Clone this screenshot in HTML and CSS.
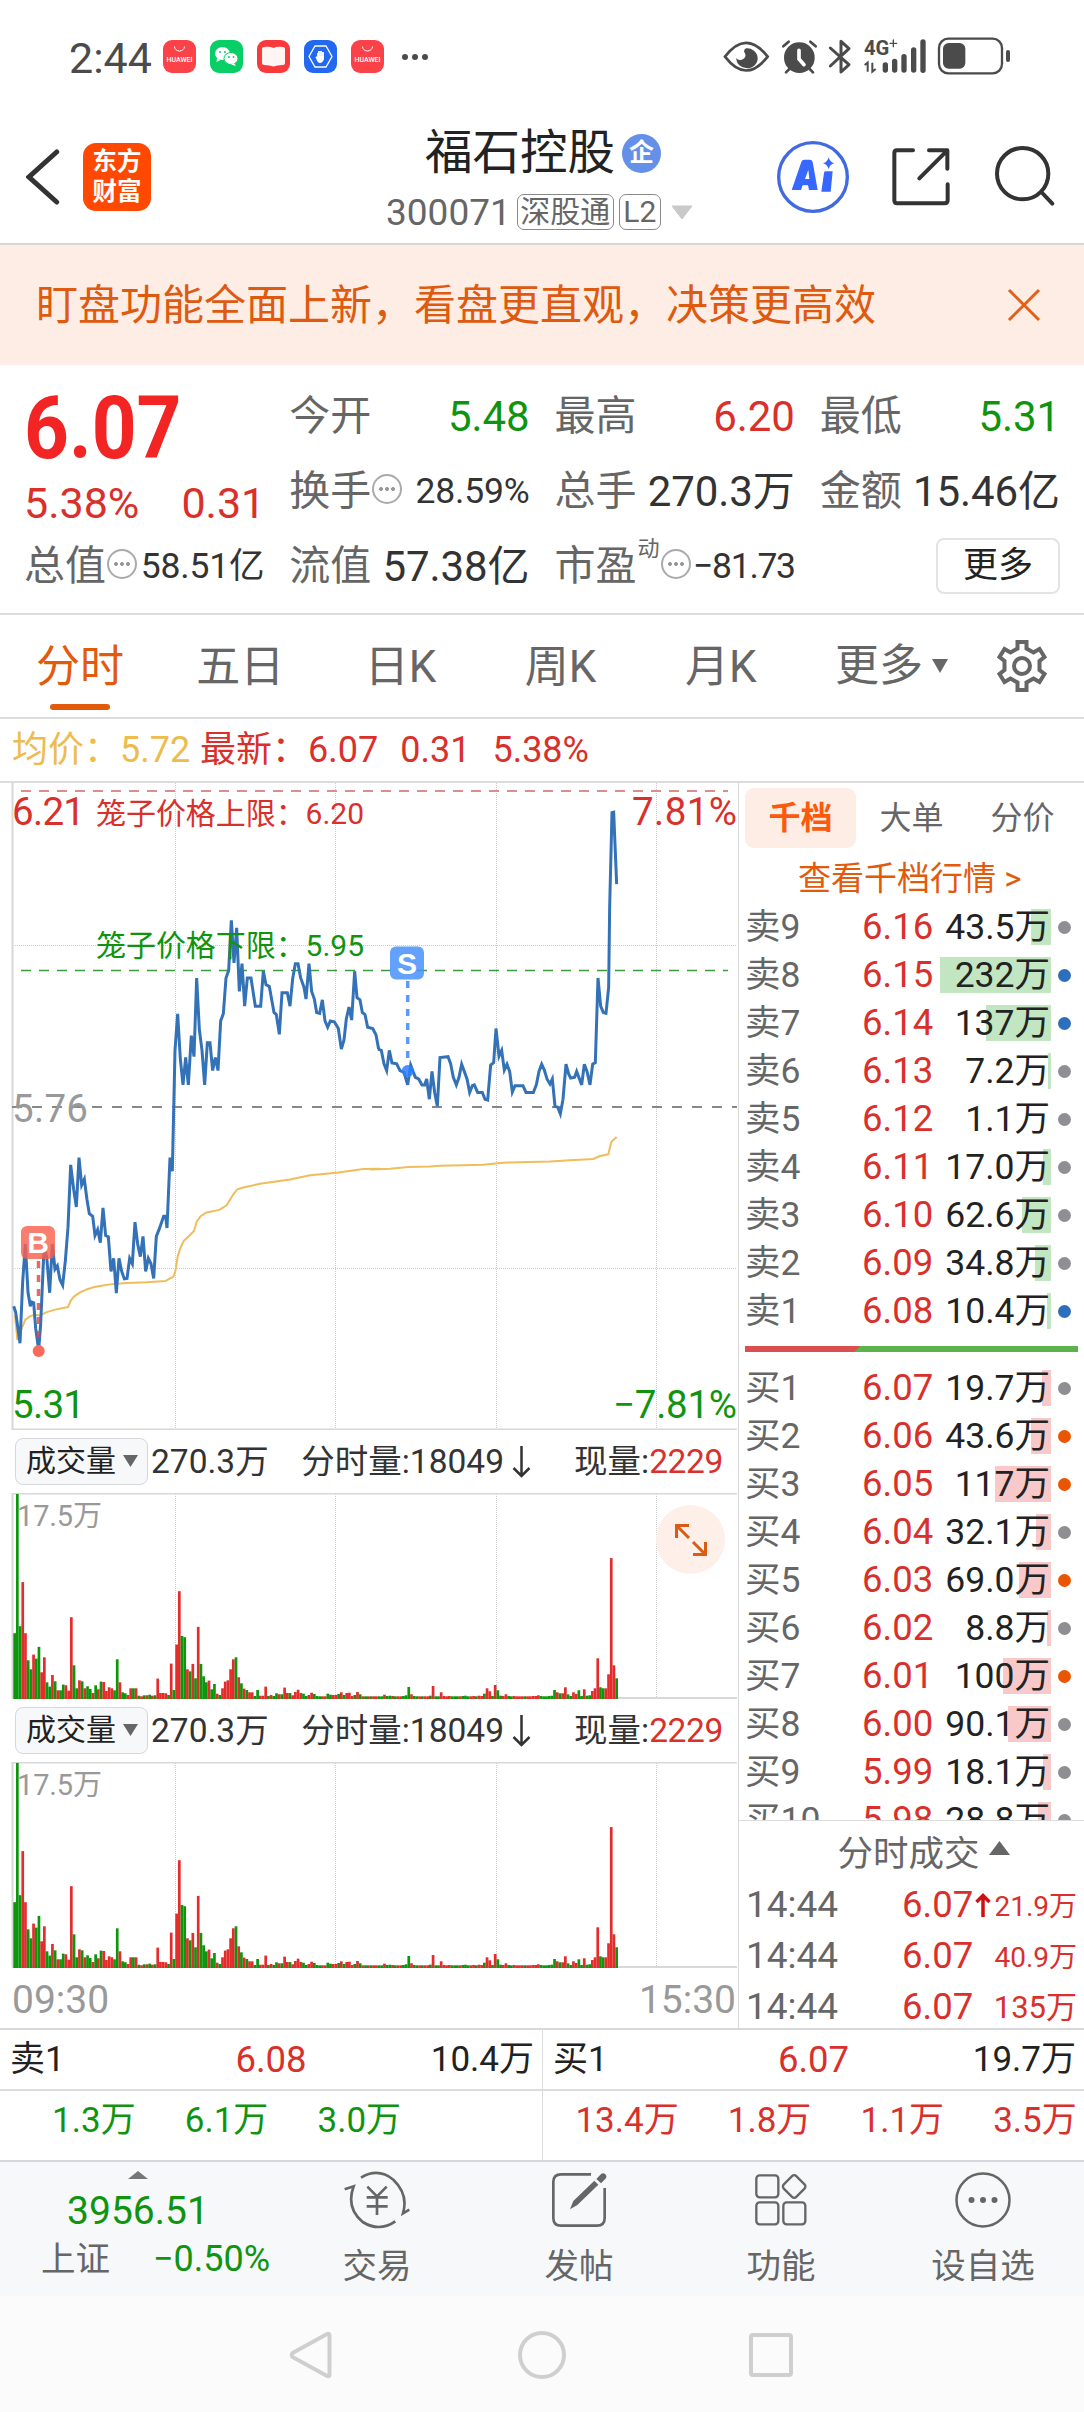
FILE: index.html
```html
<!DOCTYPE html>
<html lang="zh-CN">
<head>
    <meta charset="UTF-8">
    <meta name="viewport" content="width=device-width, initial-scale=1.0">
    <title>福石控股 300071</title>
    <link rel="stylesheet" href="styles.css">
</head>
<body>
    <div class="status-bar">
        <span class="clock">2:44</span>
        <div class="apps">
            <svg class="app" viewBox="0 0 33 33"><rect width="33" height="33" rx="9" fill="#fb4249"/><path d="M11.500 6.500a5 4.500 0 0 0 10 0" fill="none" stroke="#fff"/><text x="16.500" y="21.500" textLength="26" class="app-text">HUAWEI</text></svg>
            <svg class="app" viewBox="0 0 33 33"><rect width="33" height="33" rx="9" fill="#07cf66"/><ellipse cx="12.500" cy="13.500" rx="7.500" ry="6.500" fill="#fff"/><path d="M7 18l-.5 4 4-2z" fill="#fff"/><ellipse cx="21" cy="18.500" rx="7" ry="6" fill="#fff" stroke="#07cf66"/><path d="M24 23l2 3-5-1.500z" fill="#fff"/><g fill="#07cf66"><circle cx="10" cy="12" r="1"/><circle cx="15" cy="12" r="1"/><circle cx="19" cy="17" r=".9"/><circle cx="23.500" cy="17" r=".9"/></g></svg>
            <svg class="app" viewBox="0 0 33 33"><rect width="33" height="33" rx="9" fill="#f93a3c"/><path d="M5 9q0-2 2-2 6-1 9.500 1Q20 6 26 7q2 0 2 2v14q0 2-2 2-6 0-9.500 1.500Q13 25 7 25q-2 0-2-2z" fill="#fff5f2"/></svg>
            <svg class="app" viewBox="0 0 33 33"><rect width="33" height="33" rx="9" fill="#2268f0"/><path d="M11 6h11l6 10.500L22 27H11L5 16.500z" fill="none" stroke="#fff" stroke-width="1.300"/><path d="M12 17l2 2v-6M15 18v-7M17 18v-7M19 18v-6v7q-1 3-3 3t-3-4" fill="none" stroke="#fff" stroke-width="1.800"/><path d="M13.500 16h6v4q-1 2-3 2t-3-3z" fill="#fff"/></svg>
            <svg class="app" viewBox="0 0 33 33"><rect width="33" height="33" rx="9" fill="#fb4249"/><path d="M11.500 6.500a5 4.500 0 0 0 10 0" fill="none" stroke="#fff"/><text x="16.500" y="21.500" textLength="26" class="app-text">HUAWEI</text></svg>
        </div>
        <svg class="dots" width="28" height="8" viewBox="0 0 28 8" fill="#4b4b4b"><circle cx="4" cy="4" r="3"/><circle cx="14" cy="4" r="3"/><circle cx="24" cy="4" r="3"/></svg>
        <div class="signals">
            <svg width="47" height="38" viewBox="476 20 141 114"><path d="M482 79Q545-4 610 79Q545 162 482 79z" fill="none" stroke="#4b4b4b" stroke-width="8"/><path d="M545 54a32 30 0 1 1-29 29q5 8 16 5 14-4 11-16-1-5-4-8 0-7 6-10z" fill="#4b4b4b"/></svg>
            <svg width="37" height="38" viewBox="650 20 111 114" stroke="#4b4b4b" stroke-linecap="round"><circle cx="705" cy="82" r="46" fill="#4b4b4b" stroke="none"/><path d="M657 48l16-14M738 34l16 14M665 126l10-10M746 126l-10-10" stroke-width="8"/><path d="M704 60v26l15 17" fill="none" stroke="#fff" stroke-width="11"/></svg>
            <svg width="24" height="38" viewBox="792 20 72 114" fill="none" stroke="#4b4b4b" stroke-width="9" stroke-linejoin="round" stroke-linecap="round"><path d="M799 53l56 50-24 22V33l24 22-56 52"/></svg>
            <svg width="64" height="38" viewBox="894 20 192 114" stroke="#4b4b4b" stroke-linecap="round"><text x="897" y="74" textLength="76" lengthAdjust="spacingAndGlyphs" class="net">4G</text><path d="M975 39h20M985 29v20" stroke-width="4"/><path d="M899 104l9-7v27M922 97v27l10-8" fill="none" stroke-width="6" stroke-linecap="butt"/><path d="M961 104v15M989 93v26M1017 79v40M1046 59v60M1074 35v85" stroke-width="16"/></svg>
            <svg width="74" height="38" viewBox="1118 20 222 114"><rect x="1124" y="25" width="189" height="104" rx="28" fill="none" stroke="#4b4b4b" stroke-width="7"/><rect x="1136" y="38" width="67" height="77" rx="17" fill="#4b4b4b"/><path d="M1331 65v24" stroke="#4b4b4b" stroke-width="12" stroke-linecap="round"/></svg>
        </div>
    </div>

    <div class="header">
        <svg class="back" width="34" height="58" viewBox="78 355 102 174"><path d="M170 367L87 442l83 75" fill="none" stroke="#333" stroke-width="15" stroke-linecap="round"/></svg>
        <div class="logo">东方<br>财富</div>
        <div class="stock">
            <div class="stock-name">福石控股<span class="corp">企</span></div>
            <div class="stock-code">300071<span class="tag">深股通</span><span class="tag tag-l2">L2</span><svg width="22" height="15" viewBox="0 0 22 15"><path d="M1 1h20L11 14z" fill="#c9c9c9" stroke="#c9c9c9" stroke-linejoin="round"/></svg></div>
        </div>
        <div class="actions">
            <svg width="74" height="74" viewBox="634 331 222 222"><circle cx="745" cy="442" r="103" fill="none" stroke="#4169e1" stroke-width="10"/><path d="M681 481l29-84q2-7 9-7h16q7 0 9 7l15 84h-26l-3-14h-16l-5 14zM721 448h13l-3-27z" fill="#3668ff" fill-rule="evenodd"/><path d="M778 430q0-5 5-5h21l-6 61h-28zM792 383q3 14 17 18-14 4-17 17-4-13-17-17 14-4 17-18z" fill="#3668ff"/></svg>
            <svg width="60" height="60" viewBox="980 353 180 180" fill="none" stroke="#333" stroke-width="12" stroke-linecap="round" stroke-linejoin="round"><path d="M1046 363h-48q-8 0-8 8v142q0 9 8 9h143q9 0 9-9v-48M1094 363h55v55M1146 366l-81 81"/></svg>
            <svg width="62" height="62" viewBox="1290 347 186 186" fill="none" stroke="#333" stroke-width="12" stroke-linecap="round"><circle cx="1376" cy="433" r="77"/><path d="M1432 488l33 35"/></svg>
        </div>
    </div>

    <div class="banner">
        <span>盯盘功能全面上新，看盘更直观，决策更高效</span>
        <svg width="34" height="34" viewBox="0 0 34 34"><path d="M2 2l30 30M32 2L2 32" stroke="#e0601a" stroke-width="3"/></svg>
    </div>

    <div class="quote">
        <div class="now">
            <div class="now-price">6.07</div>
            <div class="now-change"><span>5.38%</span><span>0.31</span></div>
        </div>
        <div class="cell">今开<b class="green">5.48</b></div>
        <div class="cell">最高<b class="red">6.20</b></div>
        <div class="cell">最低<b class="green">5.31</b></div>
        <div class="cell">换手<i class="more-dot"></i><b class="small">28.59%</b></div>
        <div class="cell">总手<b>270.3万</b></div>
        <div class="cell">金额<b>15.46亿</b></div>
        <div class="cell">总值<i class="more-dot"></i><b class="small">58.51亿</b></div>
        <div class="cell">流值<b>57.38亿</b></div>
        <div class="cell">市盈<sup>动</sup><i class="more-dot"></i><b class="small tight">−81.73</b></div>
        <div class="cell"><span class="more-btn">更多</span></div>
    </div>

    <div class="tabs">
        <div class="tab active">分时</div>
        <div class="tab">五日</div>
        <div class="tab">日K</div>
        <div class="tab">周K</div>
        <div class="tab">月K</div>
        <div class="tab tab-more">更多<svg width="16" height="14" viewBox="0 0 16 14"><path d="M0 0h16L8 14z" fill="#666"/></svg></div>
        <svg class="gear" width="54" height="54" viewBox="0 0 54 54" fill="none" stroke="#666" stroke-width="4"><path d="M22.500 3h9v6.500l7 4 6-3.500 5 8-5 4v9l5 4-5 8-6-3.500-7 4V51h-9v-7.500l-7-4-6 3.500-5-8 5-4v-9l-5-4 5-8 6 3.500 7-4z"/><circle cx="27" cy="27" r="8"/></svg>
    </div>

    <div class="summary">
        <span class="avg">均价：5.72</span>
        <span>最新：6.07</span>
        <span>0.31</span>
        <span>5.38%</span>
    </div>

    <div class="board">
        <div class="charts">
            <svg class="price-chart" width="738" height="648" viewBox="0 781 738 648">
                <g class="grid">
                    <path d="M175.500 782v646M335.500 782v646M496.500 782v646M656.500 782v646M13 944.500h724M13 1267.500h724"/>
                </g>
                <path d="M12.500 782v646.500H737" class="axis"/>
                <path d="M21 790h707" stroke="#d98f8f" stroke-width="2" stroke-dasharray="10 8"/>
                <path d="M21 969.500h707" stroke="#3d9a3d" stroke-width="1.500" stroke-dasharray="10 8"/>
                <path d="M12 1106h725" stroke="#888" stroke-width="2" stroke-dasharray="10 10"/>
                <g transform="translate(0 780) scale(.33333 .42088)">
                    <g class="avg-line">
                        <polyline points="45,1270 52,1328 60,1310 68,1295 76,1280 90,1272 105,1268 120,1270 140,1262 165,1256 190,1252 204,1250 212,1235 222,1225 240,1215 260,1208 280,1203 300,1200 330,1196 380,1193 440,1191 497,1188 510,1182 520,1178 526,1165 533,1130 541,1110 552,1092 565,1083 582,1069 590,1047 602,1034 620,1025 658,1019 680,1008 700,982 712,970 730,966 780,957 870,947 930,937 1010,931 1090,922 1140,921"/>
                        <polyline transform="translate(1110 0)" points="0,923 60,921 115,917 180,916 210,914 340,912 400,907 540,904 600,901 670,898 690,891 715,887 724,857 740,846"/>
                    </g>
                    <g class="price-line">
                        <polyline points="41,1248 47,1262 60,1336 68,1190 76,1100 84,1215 91,1248 95,1238 101,1240 107,1300 116,1352 122,1290 132,1110 140,1130 149,1216 157,1100 165,1160 172,1152 180,1185 188,1198 196,1140 204,1060 212,912 221,970 229,1012 237,895 245,960 253,946 261,995 268,1028 278,1034 285,1080 293,1066 301,1097 309,1014 317,1080 325,1083 333,1165 341,1134 349,1217 357,1134 365,1165 373,1183 381,1182 389,1134 397,1147 405,1048 413,1100 421,1130 429,1082 437,1165 445,1134 453,1147 461,1182 469,1082 477,1066 491,1034 497,1034 501,1062 510,895 517,927 525,640 533,553 541,660 549,722 557,657 565,722 574,605 582,655 590,468 598,590 606,640 614,722 622,622 630,622 638,688 646,657 654,688 662,570 670,553 678,468 686,450 694,331 702,432 710,349 718,500 726,434 734,535 742,468 753,468 766,535 782,535 790,452 798,484 808,488 822,550 829,555 838,602 846,503 862,503 870,535 878,470 886,434 894,434 902,468 912,490 918,518 927,434 935,500 943,518 950,550 959,552 967,520 975,570 983,585 991,570 1003,572 1015,588 1024,637 1032,615 1039,565 1047,537 1055,568 1064,452 1071,515 1080,520 1087,550 1095,555 1103,585 1118,588 1128,603 1136,637"/>
                        <polyline transform="translate(1110 0)" points="24,637 34,640 42,672 50,688 58,640 66,670 80,672 90,688 102,692 113,722 122,675 136,704 146,708 156,722 164,722 170,708 178,756 186,690 194,740 202,773 210,657 234,655 242,672 250,704 259,722 267,704 275,673 283,690 291,708 299,740 307,724 313,722 323,740 337,740 345,756 353,758 362,675 371,669 378,588 387,654 395,640 403,687 411,673 419,690 427,739 435,724 459,724 468,740 490,740 499,722 507,690 515,673 523,687 531,708 540,720 547,708 555,773 563,775 571,791 579,756 588,673 596,696 602,706 614,704 620,690 635,722 643,673 651,690 660,722 668,673 676,669 684,468 692,535 700,550 708,552 716,490 719,300 726,75 731,74 740,245"/>
                    </g>
                </g>
                <g class="buy-mark">
                    <path d="M38.500 1260v84" stroke="#e0453a" stroke-opacity=".8" stroke-width="3.500" stroke-dasharray="7 7"/>
                    <circle cx="38.700" cy="1350" r="6" fill="#fa6a5a"/>
                    <rect x="21" y="1225" width="34" height="33" rx="6" fill="#f9604e" fill-opacity=".82"/>
                    <text x="38" y="1252" text-anchor="middle">B</text>
                </g>
                <g class="sell-mark">
                    <path d="M407.700 980v84" stroke="#5b9bf5" stroke-width="3.500" stroke-dasharray="7 7"/>
                    <circle cx="407.700" cy="1070" r="6" fill="#2a80ff" fill-opacity=".85"/>
                    <rect x="390" y="945.500" width="34" height="33" rx="6" fill="#4a92fb" fill-opacity=".86"/>
                    <text x="407" y="973" text-anchor="middle">S</text>
                </g>
                <g class="labels">
                    <text x="12" y="824" textLength="73" class="t-red">6.21</text>
                    <text x="737" y="824" text-anchor="end" textLength="105" class="t-red">7.81%</text>
                    <text x="12" y="1121" textLength="76" class="t-gray">5.76</text>
                    <text x="12" y="1417" textLength="73" class="t-green">5.31</text>
                    <text x="737" y="1417" text-anchor="end" textLength="124" class="t-green">−7.81%</text>
                </g>
                <g class="limits">
                    <text x="96" y="823" textLength="268" class="t-red">笼子价格上限：6.20</text>
                    <text x="96" y="955" textLength="268" class="t-green">笼子价格下限：5.95</text>
                </g>
            </svg>

            <div class="indicator">
                <span class="picker">成交量<svg width="15" height="12" viewBox="0 0 15 12"><path d="M0 0h15L7.500 12z" fill="#666"/></svg></span>
                <span>270.3万</span>
                <span class="per-min">分时量:18049<svg width="19" height="32" viewBox="0 0 19 32"><path d="M9.500 0v30M1.500 22l8 8 8-8" fill="none" stroke="#333" stroke-width="2.500"/></svg></span>
                <span class="last-vol">现量:<em>2229</em></span>
            </div>
            <div class="volume">
                <svg class="volume-chart" width="738" height="206" viewBox="0 0 738 206"></svg>
                <div class="expand"><svg width="36" height="36" viewBox="0 0 36 36" fill="none" stroke="#dd5a14" stroke-width="3"><path d="M16 3.500H3.500V16M3.500 3.500l12.500 12.500M20 32.500h12.500V20M32.500 32.500L20 20"/></svg></div>
            </div>

            <div class="indicator">
                <span class="picker">成交量<svg width="15" height="12" viewBox="0 0 15 12"><path d="M0 0h15L7.500 12z" fill="#666"/></svg></span>
                <span>270.3万</span>
                <span class="per-min">分时量:18049<svg width="19" height="32" viewBox="0 0 19 32"><path d="M9.500 0v30M1.500 22l8 8 8-8" fill="none" stroke="#333" stroke-width="2.500"/></svg></span>
                <span class="last-vol">现量:<em>2229</em></span>
            </div>
            <div class="volume">
                <svg class="volume-chart" width="738" height="206" viewBox="0 0 738 206"></svg>
            </div>
            <div class="times"><span>09:30</span><span>15:30</span></div>
        </div>

        <div class="depth">
            <div class="depth-tabs"><span class="on">千档</span><span>大单</span><span>分价</span></div>
            <div class="depth-link">查看千档行情 &gt;</div>
            <div class="levels sell">
                <div class="level"><span>卖9</span><b>6.16</b><em><i style="width:20px"></i>43.5万</em><u></u></div>
                <div class="level"><span>卖8</span><b>6.15</b><em><i style="width:111px"></i>232万</em><u class="blue"></u></div>
                <div class="level"><span>卖7</span><b>6.14</b><em><i style="width:65px"></i>137万</em><u class="blue"></u></div>
                <div class="level"><span>卖6</span><b>6.13</b><em><i style="width:3px"></i>7.2万</em><u></u></div>
                <div class="level"><span>卖5</span><b>6.12</b><em>1.1万</em><u></u></div>
                <div class="level"><span>卖4</span><b>6.11</b><em><i style="width:8px"></i>17.0万</em><u></u></div>
                <div class="level"><span>卖3</span><b>6.10</b><em><i style="width:29px"></i>62.6万</em><u></u></div>
                <div class="level"><span>卖2</span><b>6.09</b><em><i style="width:16px"></i>34.8万</em><u></u></div>
                <div class="level"><span>卖1</span><b>6.08</b><em><i style="width:4px"></i>10.4万</em><u class="blue"></u></div>
            </div>
            <div class="ratio"></div>
            <div class="levels buy">
                <div class="level"><span>买1</span><b>6.07</b><em><i style="width:9px"></i>19.7万</em><u></u></div>
                <div class="level"><span>买2</span><b>6.06</b><em><i style="width:20px"></i>43.6万</em><u class="orange"></u></div>
                <div class="level"><span>买3</span><b>6.05</b><em><i style="width:56px"></i>117万</em><u class="orange"></u></div>
                <div class="level"><span>买4</span><b>6.04</b><em><i style="width:15px"></i>32.1万</em><u></u></div>
                <div class="level"><span>买5</span><b>6.03</b><em><i style="width:32px"></i>69.0万</em><u class="orange"></u></div>
                <div class="level"><span>买6</span><b>6.02</b><em><i style="width:4px"></i>8.8万</em><u></u></div>
                <div class="level"><span>买7</span><b>6.01</b><em><i style="width:48px"></i>100万</em><u class="orange"></u></div>
                <div class="level"><span>买8</span><b>6.00</b><em><i style="width:43px"></i>90.1万</em><u></u></div>
                <div class="level"><span>买9</span><b>5.99</b><em><i style="width:8px"></i>18.1万</em><u></u></div>
                <div class="level"><span>买10</span><b>5.98</b><em><i style="width:13px"></i>28.8万</em><u></u></div>
            </div>
            <div class="deals">
                <div class="deals-title">分时成交<svg width="21" height="14" viewBox="0 0 21 14"><path d="M10.500 0L21 14H0z" fill="#666"/></svg></div>
                <div class="deal"><span>14:44</span><b>6.07</b><svg width="16" height="24" viewBox="0 0 16 24"><path d="M8 24V3M1.500 9L8 2.500 14.500 9" fill="none" stroke="#cf1010" stroke-width="3.500"/></svg><em>21.9万</em></div>
                <div class="deal"><span>14:44</span><b>6.07</b><em>40.9万</em></div>
                <div class="deal"><span>14:44</span><b>6.07</b><em class="wide">135万</em></div>
            </div>
        </div>
    </div>

    <div class="best">
        <div class="side">
            <div class="side-top"><span>卖1</span><b>6.08</b><span>10.4万</span></div>
            <div class="side-orders green"><span>1.3万</span><span>6.1万</span><span>3.0万</span></div>
        </div>
        <div class="side">
            <div class="side-top"><span>买1</span><b>6.07</b><span>19.7万</span></div>
            <div class="side-orders red"><span>13.4万</span><span>1.8万</span><span>1.1万</span><span>3.5万</span></div>
        </div>
    </div>

    <div class="toolbar">
        <div class="index">
            <svg width="20" height="8" viewBox="0 0 20 8"><path d="M10 0l10 8H0z" fill="#777"/></svg>
            <div class="index-value">3956.51</div>
            <div class="index-row"><span>上证</span><b>−0.50%</b></div>
        </div>
        <div class="tool">
            <svg width="68" height="60" viewBox="37 60 204 180" fill="none" stroke="#666" stroke-width="8"><path d="M91 83Q142 52 188 89q46 44 29 101l19-11M194 214Q146 247 96 216q-51-42-27-107l-27 9"/><path d="M110 110l29 29 29-29M139 139v56M108 142h63M108 169h63"/></svg>
            <span>交易</span>
        </div>
        <div class="tool">
            <svg width="60" height="60" viewBox="657 60 180 180" fill="none" stroke="#666" stroke-width="8"><path d="M783 73h-90q-23 0-23 23v108q0 23 23 23h108q23 0 23-23v-90"/><path d="M720 178l10-25 63-61 12 12-63 61zM799 87l12-13q8-8 15-1t-1 15l-12 12z" fill="#666" stroke="none"/></svg>
            <span>发帖</span>
        </div>
        <div class="tool">
            <svg width="60" height="60" viewBox="1264 60 180 180" fill="none" stroke="#666" stroke-width="7"><rect x="1280" y="76" width="66" height="66" rx="10"/><rect x="1280" y="157" width="66" height="66" rx="10"/><rect x="1361" y="157" width="66" height="66" rx="10"/><rect x="1367" y="83" width="53" height="53" rx="9" transform="rotate(45 1393.500 109.500)"/></svg>
            <span>功能</span>
        </div>
        <div class="tool">
            <svg width="60" height="60" viewBox="0 0 60 60"><circle cx="30" cy="30" r="26.500" fill="none" stroke="#666" stroke-width="2.500"/><g fill="#666"><circle cx="18.500" cy="30" r="3"/><circle cx="30" cy="30" r="3"/><circle cx="41.500" cy="30" r="3"/></g></svg>
            <span>设自选</span>
        </div>
    </div>

    <div class="sys-nav">
        <svg width="44" height="50" viewBox="0 0 44 50"><path d="M3.500 23Q2 25 3.500 27L38 46q2.500 1 2.500-1.500V5.500Q40.500 3 38 4z" class="sys"/></svg>
        <svg width="50" height="50" viewBox="0 0 50 50"><circle cx="25" cy="25" r="22" class="sys"/></svg>
        <svg width="44" height="44" viewBox="0 0 44 44"><rect x="2" y="2" width="40" height="40" rx="2" class="sys"/></svg>
    </div>

    <script src="chart.js"></script>
</body>
</html>
```
FILE: styles.css
```css
* {
    box-sizing: border-box;
}
body {
    margin: 0;
    width: 1084px;
    height: 2412px;
    overflow: hidden;
    background: #fff;
    color: #222;
    font-family: Roboto, "Noto Sans CJK SC", sans-serif;
    font-size: 36px;
}
b, em, i, u {
    font-weight: 400;
    font-style: normal;
    text-decoration: none;
}
svg {
    display: block;
    flex-shrink: 0;
}
.red {
    color: #d9302c;
}
.green {
    color: #109410;
}

/* status bar */
.status-bar {
    display: flex;
    align-items: center;
    height: 113px;
    padding: 0 73px 0 69px;
}
.clock {
    font-size: 43px;
    color: #4b4b4b;
    width: 94px;
    line-height: 50px;
    padding-top: 2px;
}
.apps {
    display: flex;
    gap: 14px;
}
.app {
    width: 33px;
    height: 33px;
}
.app-text {
    font: 500 7px Roboto, sans-serif;
    fill: #fff;
    text-anchor: middle;
}
.dots {
    margin-left: 17px;
}
.signals {
    display: flex;
    gap: 10.500px;
    margin-left: auto;
    margin-top: -2px;
}
.net {
    font: 700 62px Roboto, sans-serif;
    fill: #4b4b4b;
    stroke: none;
}

/* header */
.header {
    display: flex;
    align-items: flex-start;
    position: relative;
    height: 132px;
    border-bottom: 2px solid #d5d6da;
}
.back {
    margin: 35px 0 0 26px;
}
.logo {
    width: 68px;
    height: 68px;
    margin: 30px 0 0 23px;
    padding-top: 4px;
    border-radius: 13px;
    background: #ff4800;
    color: #fff;
    font-size: 24.500px;
    font-weight: 700;
    line-height: 30px;
    text-align: center;
}
.stock {
    width: 310px;
    margin: 11px 0 0 235px;
}
.stock-name {
    display: flex;
    align-items: center;
    padding-left: 39px;
    font-size: 47.500px;
    line-height: 58px;
}
.corp {
    width: 39px;
    height: 39px;
    margin: 1px 0 0 7px;
    border-radius: 50%;
    background: #6490e8;
    color: #fff;
    font-size: 25px;
    font-weight: 700;
    line-height: 37px;
    text-align: center;
}
.stock-code {
    display: flex;
    align-items: center;
    height: 60px;
    color: #666;
    font-size: 37px;
}
.tag {
    width: 97px;
    height: 36px;
    margin-left: 6px;
    border: 1.500px solid #888;
    border-radius: 7px;
    font-size: 30px;
    line-height: 33px;
    text-align: center;
}
.tag-l2 {
    width: 42px;
    margin-left: 5px;
}
.stock-code svg {
    margin-left: 10px;
}
.actions {
    display: flex;
    align-items: center;
    margin: 27px 0 0 80px;
}
.actions svg:nth-child(2) {
    margin-left: 41px;
}
.actions svg:nth-child(3) {
    margin-left: 43px;
    margin-top: -3px;
}

/* banner */
.banner {
    display: flex;
    align-items: center;
    justify-content: space-between;
    height: 120px;
    padding: 2px 43px 0 36px;
    background: #fdede4;
    color: #dd5a10;
    font-size: 42px;
    line-height: 60px;
}
.banner svg {
    margin-top: -2px;
}

/* quote */
.quote {
    display: grid;
    grid-template-columns: repeat(4, 1fr);
    grid-auto-rows: 75px;
    column-gap: 25px;
    height: 250px;
    padding: 14px 24px 0 24px;
    border-bottom: 2px solid #dcdcdc;
}
.now {
    grid-row: span 2;
    color: #d9302c;
}
.now-price {
    height: 99px;
    padding-top: 3px;
    font-size: 88px;
    font-weight: 700;
    line-height: 92px;
    color: #f22424;
    transform: scaleX(.89);
    transform-origin: left;
}
.now-change {
    display: flex;
    justify-content: space-between;
    margin-right: -1px;
    font-size: 43px;
    line-height: 50px;
}
.cell {
    display: flex;
    align-items: center;
    color: #666;
    font-size: 41px;
    line-height: 75px;
    white-space: nowrap;
}
.cell b {
    margin-left: auto;
    color: #333;
    font-size: 42px;
    letter-spacing: -.1px;
}
.cell .red {
    color: #d9302c;
}
.cell .green {
    color: #109410;
}
.cell .small {
    font-size: 35.500px;
    letter-spacing: -.2px;
}
.cell .tight {
    letter-spacing: -1.300px;
}
.cell sup {
    font-size: 22px;
    line-height: 30px;
    margin: -36px 0 0 1px;
}
.more-dot {
    width: 30px;
    height: 30px;
    margin: -5px 0 0 1px;
    border: 2px solid #aaa;
    border-radius: 50%;
    background: radial-gradient(circle, #999 1.800px, transparent 2.200px) center / 6px 6px no-repeat,
        radial-gradient(circle, #999 1.800px, transparent 2.200px) 4px center / 6px 6px no-repeat,
        radial-gradient(circle, #999 1.800px, transparent 2.200px) 16px center / 6px 6px no-repeat;
}
.more-btn {
    width: 124px;
    height: 56px;
    margin: -1px 0 0 auto;
    border: 2px solid #e3e3e3;
    border-radius: 8px;
    color: #222;
    font-size: 35px;
    line-height: 51px;
    text-align: center;
}

/* period tabs */
.tabs {
    display: flex;
    align-items: center;
    height: 104px;
    border-bottom: 2px solid #dcdcdc;
    color: #666;
    font-size: 44px;
}
.tab {
    position: relative;
    width: 160.200px;
    height: 100px;
    line-height: 102px;
    text-align: center;
}
.tab.active {
    color: #e25a0c;
}
.tab.active::after {
    content: '';
    position: absolute;
    left: 50px;
    bottom: 6px;
    width: 60px;
    height: 6px;
    border-radius: 3px;
    background: #e25a0c;
}
.tab-more {
    display: flex;
    align-items: center;
    gap: 9px;
    padding-left: 34px;
}
.gear {
    margin-left: 34px;
}

.summary {
    display: flex;
    height: 62px;
    padding-left: 12px;
    color: #d9302c;
    font-size: 36px;
    line-height: 63px;
}
.summary .avg {
    width: 188px;
    color: #eebb4d;
}
.summary span + span {
    margin-right: 22px;
}

/* charts */
.board {
    display: flex;
    height: 1249px;
    border-top: 2px solid #dcdcdc;
    border-bottom: 2px solid #d8d8d8;
}
.charts {
    width: 739px;
    margin-top: -1px;
    border-right: 1px solid #d8d8d8;
}
.grid path {
    stroke: #ccc;
    stroke-width: 1;
    stroke-dasharray: 1 1;
}
.axis {
    fill: none;
    stroke: #d8d8d8;
    stroke-width: 2;
}
.avg-line polyline,
.price-line polyline {
    fill: none;
    stroke: #efbd5c;
    stroke-width: 2;
    vector-effect: non-scaling-stroke;
}
.price-line polyline {
    stroke: #3472b8;
    stroke-width: 3;
}
.buy-mark text,
.sell-mark text {
    font: 700 30px "Liberation Sans", sans-serif;
    fill: #fff;
}
.labels text {
    font-size: 38.500px;
}
.limits text {
    font-size: 30px;
}
.t-red {
    fill: #d9302c;
}
.t-green {
    fill: #109410;
}
.t-gray {
    fill: #999;
}
.indicator {
    display: flex;
    align-items: center;
    height: 63px;
    padding-left: 15px;
    color: #333;
    font-size: 33.500px;
    line-height: 60px;
    white-space: nowrap;
}
.picker {
    display: flex;
    align-items: center;
    justify-content: space-between;
    width: 133px;
    height: 47px;
    margin-right: 3px;
    padding: 0 9px 2px 10px;
    border: 1px solid #d5d8dc;
    border-radius: 8px;
    background: #f6f8fa;
    color: #222;
    font-size: 30px;
}
.per-min {
    display: flex;
    align-items: center;
    gap: 8px;
    margin-left: auto;
}
.last-vol {
    width: 164px;
    margin-left: 43px;
}
.last-vol em {
    color: #d9302c;
    letter-spacing: -.4px;
}
.volume {
    position: relative;
    height: 206px;
}
.volume-label {
    font-size: 29px;
    fill: #999;
}
.expand {
    position: absolute;
    left: 656px;
    top: 12px;
    width: 69px;
    height: 69px;
    padding: 17px;
    border-radius: 50%;
    background: #fef0e9;
}
.times {
    display: flex;
    justify-content: space-between;
    padding: 0 2px 0 12px;
    color: #999;
    font-size: 39px;
    line-height: 64px;
}

/* order depth */
.depth {
    flex: 1;
    display: flex;
    flex-direction: column;
    overflow: hidden;
}
.depth-tabs {
    display: flex;
    margin: 5px 0 0 6px;
    color: #666;
    font-size: 32px;
    line-height: 60px;
    text-align: center;
}
.depth-tabs span {
    width: 111px;
    height: 60px;
    border-radius: 9px;
}
.depth-tabs .on {
    background: #fdede4;
    color: #fa5a0a;
    font-weight: 700;
}
.depth-link {
    height: 55px;
    padding-left: 59px;
    color: #e25a0c;
    font-size: 33px;
    line-height: 61px;
}
.level {
    display: flex;
    align-items: center;
    height: 48px;
    padding: 0 13px 0 6px;
    line-height: 48px;
    white-space: nowrap;
}
.level span {
    width: 117px;
    color: #666;
    font-size: 35.500px;
}
.level b {
    width: 73px;
    color: #d9302c;
    font-size: 36.500px;
}
.level em {
    position: relative;
    flex: 1;
    height: 36px;
    line-height: 37px;
    padding-right: 1px;
    text-align: right;
    font-size: 35.500px;
}
.level i {
    position: absolute;
    right: 0;
    top: 0;
    height: 36px;
    z-index: -1;
    background: #c1e6c1;
}
.buy .level i {
    background: #f9c9c9;
}
.level u {
    width: 13px;
    height: 13px;
    margin-left: 7px;
    border-radius: 50%;
    background: #8e8e93;
}
.level .blue {
    background: #2c70bd;
}
.level .orange {
    background: #ea5504;
}
.ratio {
    flex-shrink: 0;
    height: 6px;
    margin: 11px 6px 12px;
    background: linear-gradient(135deg, #d9504e 34%, #5cb34b 34%);
}
.buy {
    flex-shrink: 0;
    height: 456px;
    overflow: hidden;
}
.deals {
    position: relative;
    border-top: 1px solid #dcdcdc;
    background: #fff;
}
.deals-title {
    display: flex;
    align-items: center;
    justify-content: center;
    gap: 9px;
    height: 58px;
    padding: 0 10px 0 34px;
    color: #666;
    font-size: 35.500px;
}
.deals-title svg {
    margin-top: -4px;
}
.deal {
    display: flex;
    align-items: center;
    height: 51px;
    padding: 0 7px 0 7px;
    line-height: 51px;
    color: #d9302c;
}
.deal span {
    width: 156px;
    color: #666;
    font-size: 37px;
}
.deal b {
    width: 73px;
    font-size: 36.500px;
}
.deal em {
    margin: 4px 0 0 auto;
    font-size: 28px;
}
.deal em.wide {
    margin-top: 2px;
    font-size: 31px;
}

/* best bid and ask */
.best {
    display: flex;
    height: 132px;
    border-bottom: 2px solid #d5d8dc;
}
.side {
    width: 542px;
}
.side + .side {
    border-left: 1px solid #dcdcdc;
}
.side-top {
    display: grid;
    grid-template-columns: 1fr auto 1fr;
    height: 61px;
    padding: 0 8px 0 10px;
    border-bottom: 2px solid #dcdcdc;
    font-size: 35px;
    line-height: 60px;
}
.side-top b {
    margin-left: -2px;
    color: #d9302c;
    font-size: 36.500px;
}
.side-top span:last-child {
    text-align: right;
}
.side-orders {
    display: grid;
    grid-template-columns: repeat(4, 132.700px);
    padding-left: 3px;
    font-size: 35px;
    line-height: 60px;
    text-align: right;
}

/* bottom toolbar */
.toolbar {
    display: flex;
    height: 134px;
    background: #f6f8fa;
    color: #666;
    font-size: 34.500px;
}
.index {
    display: flex;
    flex-direction: column;
    align-items: center;
    width: 276px;
    padding-top: 9px;
}
.index-value {
    margin-top: 9px;
    color: #109410;
    font-size: 39px;
    line-height: 46px;
}
.index-row {
    display: flex;
    gap: 43px;
    padding-left: 41px;
    width: 100%;
    line-height: 50px;
}
.index-row b {
    color: #109410;
    font-size: 36px;
}
.tool {
    display: flex;
    flex-direction: column;
    align-items: center;
    width: 202px;
    padding-top: 8px;
}
.tool span {
    margin-top: 11px;
    line-height: 50px;
}

.sys-nav {
    display: flex;
    align-items: center;
    height: 117px;
    padding-left: 289px;
    background: #fbfbfb;
}
.sys-nav svg:nth-child(2) {
    margin-left: 184px;
}
.sys-nav svg:nth-child(3) {
    margin-left: 182px;
}
.sys {
    fill: none;
    stroke: #cfcfcf;
    stroke-width: 4;
}
```
FILE: chart.js
```js
// one entry per minute: g = down, r = up
var volumes = ("g197 g614 g218 r350 r197 g116 g89 r133 g121 g156 r80 r125 g50 g37 r72 g53 r26 g26 g43 r41 " +
    "r25 r245 g101 g32 r56 g53 r32 g38 g30 r18 g41 r29 g52 r51 r24 r35 r32 g26 g119 r50 " +
    "g20 g17 r12 r32 g32 r32 g10 r8 g11 r11 g13 r10 g11 r61 r18 r18 r17 g12 r106 g27 " +
    "r163 r323 g189 g185 r89 g83 r105 g62 r216 g105 g68 g50 r55 g29 g45 r16 g12 r32 r52 r56 " +
    "r89 r119 g125 r65 g47 r31 g27 r20 r20 g9 g27 r10 r10 r37 g9 r12 g9 g17 r14 g14 " +
    "r34 r18 g18 r11 r21 r28 r18 g16 g9 r12 r19 g15 g9 g8 r8 r8 g16 g13 r12 r12 " +
    "g15 r20 g12 r18 r19 r9 g12 r21 g14 r8 g8 r8 g8 r8 r8 g8 g8 r13 g9 g10 " +
    "r9 g8 r8 r8 g9 g11 g36 r14 g9 g8 r8 g8 r8 r8 g10 r39 g8 g8 r20 r9 " +
    "r8 r9 g8 g8 g8 r8 g9 g10 g8 r8 r9 g8 r10 r9 g16 r32 r23 g9 r42 g26 " +
    "g10 r9 r14 g9 g8 r9 r8 r8 r8 g8 r8 r8 r9 r9 r11 g9 g8 g8 g9 g10 " +
    "g27 r20 g17 r17 r35 g14 g9 r20 r15 g26 g9 r29 g10 g11 r24 r32 r122 g35 g32 r32 r74 r422 r101 g62").split(" ");
var MAX_VOLUME = 614;
var COLORS = { g: "#0b960b", r: "#e32c2c" };

function drawVolume(svg) {
    var html = '<g class="grid"><path d="M175.5 1v204M335.5 1v204M496.5 1v204M656.5 1v204"/></g>' +
        '<path class="axis" d="M12.5 205V.5H737M12 205h725"/>' +
        '<text class="volume-label" x="17" y="33" textLength="85">17.5万</text>';
    var step = (618 - 13.3) / volumes.length;
    volumes.forEach(function (item, i) {
        var h = item.slice(1) / MAX_VOLUME * 205;
        html += '<rect x="' + (13.3 + i * step).toFixed(2) + '" y="' + (206 - h).toFixed(1) +
            '" width="' + step.toFixed(2) + '" height="' + h.toFixed(1) + '" fill="' + COLORS[item[0]] + '"/>';
    });
    svg.innerHTML = html;
}

document.querySelectorAll(".volume-chart").forEach(drawVolume);
```
